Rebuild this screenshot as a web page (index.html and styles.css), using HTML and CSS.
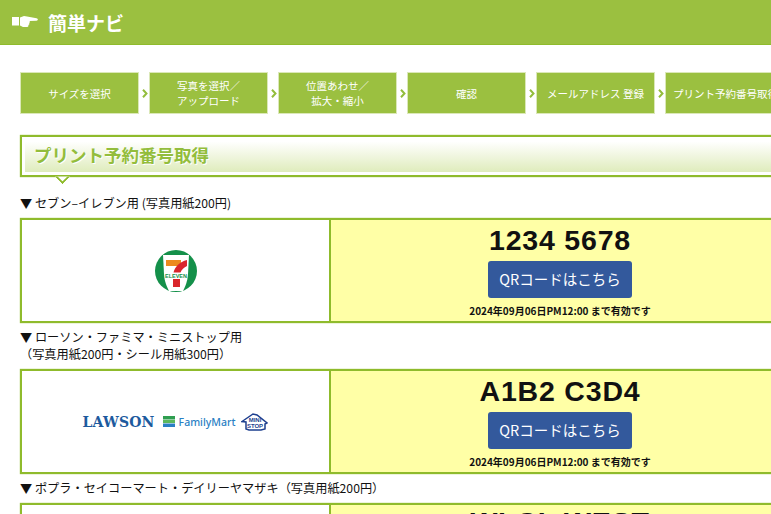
FILE: index.html
```html
<!DOCTYPE html>
<html lang="ja">
<head>
    <meta charset="UTF-8">
    <meta name="viewport" content="width=device-width, initial-scale=1.0">
    <title>簡単ナビ</title>
    <link rel="stylesheet" href="styles.css">
</head>
<body>
    <header class="nav-head">
        <svg class="hand" width="26" height="12" viewBox="0 0 26 12">
            <path fill="#fff" d="M0 1h7v8.500H0zM8 1.500 12 0l3 .5 9.500 1.700c1.800.5 1.800 2.300 0 2.600l-7 .2.500 1-.8 1 .2 1.200-1 .8v1.200l-1 .8H11L8 9.500z"/>
        </svg>
        <span class="nav-title">簡単ナビ</span>
    </header>

    <main class="content">
        <ol class="steps">
            <li class="step">サイズを選択</li>
            <li class="arrow"><svg width="6" height="9" viewBox="0 0 6 9"><path fill="none" stroke="#93bd3c" stroke-width="2" d="M1 .7 4.500 4.500 1 8.300"/></svg></li>
            <li class="step">写真を選択／<br>アップロード</li>
            <li class="arrow"><svg width="6" height="9" viewBox="0 0 6 9"><path fill="none" stroke="#93bd3c" stroke-width="2" d="M1 .7 4.500 4.500 1 8.300"/></svg></li>
            <li class="step">位置あわせ／<br>拡大・縮小</li>
            <li class="arrow"><svg width="6" height="9" viewBox="0 0 6 9"><path fill="none" stroke="#93bd3c" stroke-width="2" d="M1 .7 4.500 4.500 1 8.300"/></svg></li>
            <li class="step">確認</li>
            <li class="arrow"><svg width="6" height="9" viewBox="0 0 6 9"><path fill="none" stroke="#93bd3c" stroke-width="2" d="M1 .7 4.500 4.500 1 8.300"/></svg></li>
            <li class="step">メールアドレス 登録</li>
            <li class="arrow"><svg width="6" height="9" viewBox="0 0 6 9"><path fill="none" stroke="#93bd3c" stroke-width="2" d="M1 .7 4.500 4.500 1 8.300"/></svg></li>
            <li class="step step-last">プリント予約番号取得</li>
        </ol>

        <h2 class="page-title"><span class="page-title-inner">プリント予約番号取得</span></h2>

        <p class="shop-label">▼ セブン–イレブン用 (写真用紙200円)</p>
        <div class="shop-row">
            <div class="shop-logo">
                <svg width="42" height="42" viewBox="0 0 42 42">
                    <circle cx="21" cy="21" r="21" fill="#14904a"/>
                    <path fill="#fff" d="M8 5h26l-1 19c-.5 8-3 13-5 17H14c-2-4-4.500-9-5-17z"/>
                    <rect x="11" y="10" width="15" height="6" fill="#ec8a1e"/>
                    <path fill="#d9262c" d="M32 10v6c-3 1.500-5.500 3.500-6.500 6.500h-7c1.500-6 6-10.500 13.500-12.500zM18 29h7v8h-7z"/>
                    <text class="eleven" x="21" y="28" text-anchor="middle">ELEVEN</text>
                </svg>
            </div>
            <div class="shop-code">
                <div class="code">1234 5678</div>
                <a class="qr-btn">QRコードはこちら</a>
                <div class="limit">2024年09月06日PM12:00 まで有効です</div>
            </div>
        </div>

        <p class="shop-label">▼ ローソン・ファミマ・ミニストップ用<br>（写真用紙200円・シール用紙300円）</p>
        <div class="shop-row">
            <div class="shop-logo">
                <span class="lawson">LAWSON</span>
                <svg class="fm-mark" width="12" height="11" viewBox="0 0 12 11">
                    <rect width="12" height="3.500" fill="#2f9e50"/>
                    <rect y="4" width="12" height="3" fill="#5cb85c"/>
                    <rect y="7.500" width="12" height="3.500" fill="#2a7fc4"/>
                </svg>
                <span class="famima">FamilyMart</span>
                <svg class="ms-mark" width="27" height="18" viewBox="0 0 27 18">
                    <path fill="#fff" stroke="#1d3f8f" stroke-width="1.500" d="M1 8.500 12 1l4 1 10 8-2 1v5l-4 1H8l-3-1V9z"/>
                    <text class="ministop" x="14" y="8.500">MINI</text>
                    <text class="ministop" x="14" y="14.500">STOP</text>
                </svg>
            </div>
            <div class="shop-code">
                <div class="code">A1B2 C3D4</div>
                <a class="qr-btn">QRコードはこちら</a>
                <div class="limit">2024年09月06日PM12:00 まで有効です</div>
            </div>
        </div>

        <p class="shop-label">▼ ポプラ・セイコーマート・デイリーヤマザキ（写真用紙200円）</p>
        <div class="shop-row">
            <div class="shop-logo"></div>
            <div class="shop-code">
                <div class="code code-third">WLCL WEST</div>
            </div>
        </div>
    </main>
</body>
</html>
```

FILE: styles.css
```css
html, body {
    height: 514px;
    overflow: hidden;
}
body {
    margin: 0;
    font-family: "Noto Sans CJK JP", "Noto Sans", sans-serif;
    color: #111;
    background-color: #fff;
}
.nav-head {
    display: flex;
    align-items: center;
    height: 44px;
    padding-left: 12px;
    background-color: #9bc040;
    border-bottom: 1px solid #8fbb2c;
}
.hand {
    margin-right: 10px;
}
.nav-title {
    color: #fff;
    font-size: 19px;
    font-weight: 700;
}
.content {
    width: 770px;
    padding: 27px 0 0 20px;
}
.steps {
    display: flex;
    margin: 0 0 21px;
    padding: 0;
    list-style: none;
}
.step {
    display: flex;
    align-items: center;
    justify-content: center;
    flex: none;
    width: 119px;
    height: 42px;
    box-sizing: border-box;
    background-color: #9bc040;
    border: 1px solid #dbe8b8;
    color: #fff;
    font-size: 10.500px;
    line-height: 15px;
    text-align: center;
    white-space: nowrap;
}
.step-last {
    justify-content: flex-start;
    padding-left: 7px;
}
.arrow {
    display: flex;
    align-items: center;
    justify-content: flex-end;
    flex: none;
    width: 10px;
    padding-right: 1px;
    box-sizing: border-box;
}
.page-title {
    position: relative;
    margin: 0 0 18px;
    height: 42px;
    box-sizing: border-box;
    border: 2px solid #8fbb2c;
    border-right: 0;
    padding: 1px 0 3px 3px;
    box-shadow: 0 0 1px #8fbb2c;
}
.page-title::after {
    content: "";
    position: absolute;
    left: 35px;
    top: 33.500px;
    width: 11px;
    height: 11px;
    box-sizing: border-box;
    background-color: #fff;
    border-right: 2px solid #8fbb2c;
    border-bottom: 2px solid #8fbb2c;
    clip-path: polygon(100% 0, 100% 100%, 0 100%);
    transform: rotate(45deg);
}
.page-title-inner {
    display: block;
    height: 100%;
    padding-left: 9px;
    background: linear-gradient(#fff 10%, #dfecbc);
    color: #93bd3c;
    font-size: 17.500px;
    font-weight: 700;
    line-height: 34px;
    text-shadow: 1px 1px 0 #fff;
}
.shop-label {
    margin: 0 0 6px;
    font-size: 12.200px;
    line-height: 17px;
}
.shop-row {
    display: grid;
    grid-template-columns: 309px 458px;
    height: 105px;
    box-sizing: border-box;
    margin-bottom: 6px;
    border: 2px solid #8fbb2c;
    box-shadow: 0 0 1px #8fbb2c;
}
.shop-logo {
    display: flex;
    align-items: center;
    justify-content: center;
    border-right: 2px solid #8fbb2c;
}
.eleven {
    fill: #14904a;
    font-size: 5.500px;
    font-weight: 700;
    font-family: "Liberation Sans", sans-serif;
}
.lawson {
    color: #1d5a9e;
    font-family: "DejaVu Serif", serif;
    font-size: 14px;
    font-weight: 700;
    letter-spacing: 0.2px;
}
.fm-mark {
    margin-left: 8px;
}
.famima {
    margin-left: 4px;
    color: #2a7fc4;
    font-family: "Noto Sans", sans-serif;
    font-size: 10.500px;
    font-weight: 500;
}
.ms-mark {
    margin-left: 6px;
}
.ministop {
    fill: #1d3f8f;
    font-size: 6px;
    font-weight: 700;
    text-anchor: middle;
    font-family: "Liberation Sans", sans-serif;
}
.shop-code {
    display: flex;
    flex-direction: column;
    align-items: center;
    background-color: #ffffa6;
}
.code {
    margin-top: 2px;
    font-family: "Liberation Sans", sans-serif;
    font-size: 28.500px;
    font-weight: 700;
    line-height: 36px;
    letter-spacing: 0.8px;
    color: #111;
}
.code-third {
    margin-top: -1px;
}
.qr-btn {
    display: block;
    width: 144px;
    height: 37px;
    margin-top: 3px;
    background-color: #33599c;
    border-radius: 3px;
    color: #fff;
    font-size: 14.500px;
    line-height: 36px;
    text-align: center;
}
.limit {
    margin-top: 5px;
    font-size: 10px;
    font-weight: 700;
    line-height: 15px;
}
```
